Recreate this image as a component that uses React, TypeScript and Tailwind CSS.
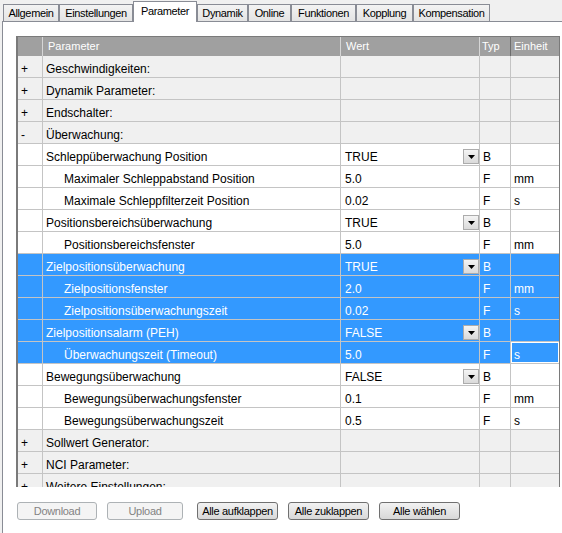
import React from 'react'

type Row =
  | { group: true; sign: string; label: string }
  | {
      group?: false
      label: string
      sub?: boolean
      value: string
      drop?: boolean
      typ: string
      unit?: string
      sel?: boolean
      focus?: boolean
    }

const tabs = [
  { label: 'Allgemein', w: 'w-[56px]' },
  { label: 'Einstellungen', w: 'w-[74px]' },
  { label: 'Parameter', w: 'w-[64px]', active: true },
  { label: 'Dynamik', w: 'w-[51px]' },
  { label: 'Online', w: 'w-[43px]' },
  { label: 'Funktionen', w: 'w-[65px]' },
  { label: 'Kopplung', w: 'w-[57px]' },
  { label: 'Kompensation', w: 'w-[77px]' },
]

const rows: Row[] = [
  { group: true, sign: '+', label: 'Geschwindigkeiten:' },
  { group: true, sign: '+', label: 'Dynamik Parameter:' },
  { group: true, sign: '+', label: 'Endschalter:' },
  { group: true, sign: '-', label: 'Überwachung:' },
  { label: 'Schleppüberwachung Position', value: 'TRUE', drop: true, typ: 'B' },
  { label: 'Maximaler Schleppabstand Position', sub: true, value: '5.0', typ: 'F', unit: 'mm' },
  { label: 'Maximale Schleppfilterzeit Position', sub: true, value: '0.02', typ: 'F', unit: 's' },
  { label: 'Positionsbereichsüberwachung', value: 'TRUE', drop: true, typ: 'B' },
  { label: 'Positionsbereichsfenster', sub: true, value: '5.0', typ: 'F', unit: 'mm' },
  { label: 'Zielpositionsüberwachung', value: 'TRUE', drop: true, typ: 'B', sel: true },
  { label: 'Zielpositionsfenster', sub: true, value: '2.0', typ: 'F', unit: 'mm', sel: true },
  { label: 'Zielpositionsüberwachungszeit', sub: true, value: '0.02', typ: 'F', unit: 's', sel: true },
  { label: 'Zielpositionsalarm (PEH)', value: 'FALSE', drop: true, typ: 'B', sel: true },
  { label: 'Überwachungszeit (Timeout)', sub: true, value: '5.0', typ: 'F', unit: 's', sel: true, focus: true },
  { label: 'Bewegungsüberwachung', value: 'FALSE', drop: true, typ: 'B' },
  { label: 'Bewegungsüberwachungsfenster', sub: true, value: '0.1', typ: 'F', unit: 'mm' },
  { label: 'Bewegungsüberwachungszeit', sub: true, value: '0.5', typ: 'F', unit: 's' },
  { group: true, sign: '+', label: 'Sollwert Generator:' },
  { group: true, sign: '+', label: 'NCI Parameter:' },
  { group: true, sign: '+', label: 'Weitere Einstellungen:' },
]

function DropButton() {
  return (
    <div className="mb-[1px] flex h-[15px] w-[16px] shrink-0 items-center justify-center self-end border border-[#acacac] bg-linear-to-b from-[#f4f4f4] to-[#dadada]">
      <svg width="7" height="4" viewBox="0 0 7 4">
        <path d="M0 0h7L3.5 4z" fill="#000" />
      </svg>
    </div>
  )
}

function GridRow({ row }: { row: Row }) {
  if (row.group) {
    return (
      <div className="flex h-[22px] shrink-0 border-b border-[#c4c4c4] bg-[#f0f0f0] text-black">
        <div className="w-[25px] border-r border-[#c4c4c4] pl-[3px] pt-[3px] leading-[20px]">{row.sign}</div>
        <div className="w-[298px] whitespace-nowrap border-r border-[#c4c4c4] pl-[3px] pt-[3px] leading-[20px]">
          {row.label}
        </div>
        <div className="w-[139px] border-r border-[#c4c4c4]" />
        <div className="w-[31px] border-r border-[#c4c4c4]" />
        <div className="w-[48px]" />
      </div>
    )
  }

  const bg = row.sel ? 'bg-[#3399ff] text-white' : 'bg-white text-black'

  return (
    <div className={`flex h-[22px] shrink-0 border-b border-[#c4c4c4] ${bg}`}>
      <div className="w-[25px] border-r border-[#c4c4c4]" />
      <div
        className={`w-[298px] whitespace-nowrap border-r border-[#c4c4c4] pt-[3px] leading-[20px] ${
          row.sub ? 'pl-[21px]' : 'pl-[3px]'
        }`}
      >
        {row.label}
      </div>
      <div className="flex w-[139px] justify-between border-r border-[#c4c4c4] pl-[4px]">
        <span className="pt-[3px] leading-[20px]">{row.value}</span>
        {row.drop && <DropButton />}
      </div>
      <div className="w-[31px] border-r border-[#c4c4c4] pl-[3px] pt-[3px] leading-[20px]">{row.typ}</div>
      <div
        className={`w-[48px] pl-[3px] pt-[3px] leading-[20px] ${row.focus ? 'shadow-[inset_0_0_0_1px_#ffffff]' : ''}`}
      >
        {row.unit}
      </div>
    </div>
  )
}

function Button({ label, disabled, w }: { label: string; disabled?: boolean; w: string }) {
  return (
    <div
      className={`flex h-[18px] ${w} items-center justify-center rounded-[3px] border text-[11px] leading-[14px] tracking-[-0.3px] ${
        disabled
          ? 'border-[#adb2b5] bg-[#f4f4f4] text-[#838383]'
          : 'border-[#707070] bg-linear-to-b from-[#f2f2f2] to-[#d8d8d8] text-black'
      }`}
    >
      {label}
    </div>
  )
}

export default function App() {
  return (
    <div className="flex h-[533px] w-[562px] flex-col overflow-hidden bg-[#f0f0f0] pl-[2px] font-['Liberation_Sans',Arial,sans-serif]">
      {/* tabs */}
      <div className="relative z-10 flex h-[21px] shrink-0 items-end pl-[1px]">
        {tabs.map((t) =>
          t.active ? (
            <div
              key={t.label}
              className={`-mb-px flex h-[21px] ${t.w} items-center justify-center border-x border-t border-[#898c95] bg-white pb-[2px] text-[11px] tracking-[-0.35px] text-black`}
            >
              {t.label}
            </div>
          ) : (
            <div
              key={t.label}
              className={`flex h-[17px] ${t.w} items-center justify-center border-x border-t border-[#898c95] bg-linear-to-b from-[#f3f3f3] to-[#e4e4e4] text-[11px] tracking-[-0.35px] text-black`}
            >
              {t.label}
            </div>
          ),
        )}
      </div>

      {/* panel */}
      <div className="flex flex-1 flex-col border-l border-t border-[#898c95] bg-white pl-[13px] pt-[14px]">
        <div className="flex h-[451px] w-[544px] flex-col overflow-hidden border-l-2 border-r border-t border-[#7a7a7a] text-[12px]">
          <div className="flex h-[19px] shrink-0 bg-[#a0a0a0] text-[11px] leading-[19px] text-white">
            <div className="w-[25px] border-r border-[#d6d6d6]" />
            <div className="w-[298px] border-r border-[#d6d6d6] pl-[5px]">Parameter</div>
            <div className="w-[139px] border-r border-[#d6d6d6] pl-[5px]">Wert</div>
            <div className="w-[31px] border-r border-[#6e6e6e] pl-[2px]">Typ</div>
            <div className="w-[48px] pl-[3px]">Einheit</div>
          </div>
          {rows.map((r, i) => (
            <GridRow key={i} row={r} />
          ))}
        </div>

        <div className="ml-[1px] mt-[15px] flex gap-[10px]">
          <Button label="Download" disabled w="w-[80px]" />
          <Button label="Upload" disabled w="w-[76px]" />
          <Button label="Alle aufklappen" w="w-[81px] ml-[4px]" />
          <Button label="Alle zuklappen" w="w-[81px]" />
          <Button label="Alle wählen" w="w-[81px]" />
        </div>
      </div>
    </div>
  )
}
